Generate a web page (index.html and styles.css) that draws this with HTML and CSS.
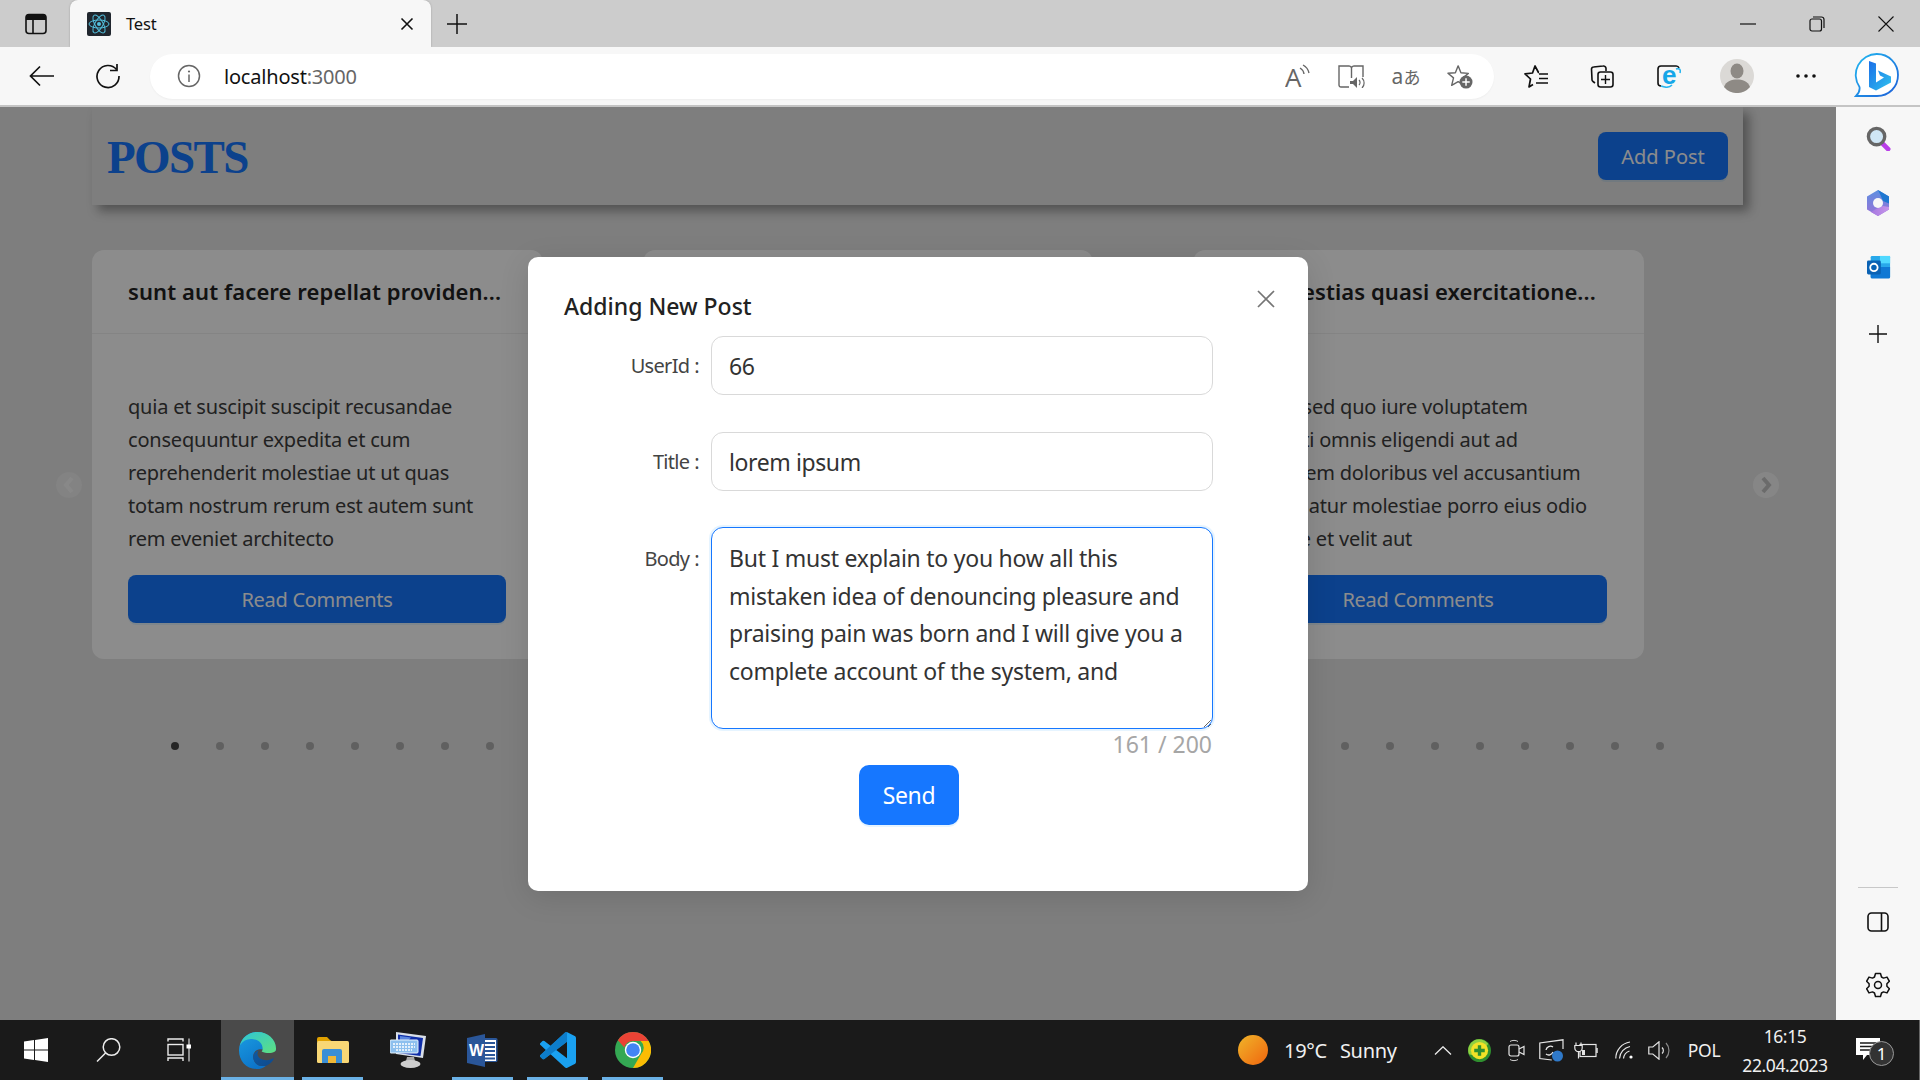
FILE: index.html
```html
<!DOCTYPE html>
<html lang="en">
<head>
<meta charset="utf-8">
<title>Test</title>
<link rel="stylesheet" href="styles.css">
</head>
<body>
<div class="tabstrip">
  <div class="tab-side">
    <svg width="24" height="24" viewBox="0 0 24 24"><rect x="2" y="2.500" width="20" height="19" rx="3" fill="none" stroke="#111" stroke-width="1.600"/><path d="M2 6a3.500 3.500 0 0 1 3.500-3.500h13A3.500 3.500 0 0 1 22 6v2H2z" fill="#111"/><path d="M9 8v13" stroke="#111" stroke-width="1.600"/></svg>
  </div>
  <div class="tab">
    <svg class="favicon" width="24" height="24" viewBox="0 0 24 24"><rect width="24" height="24" rx="2" fill="#20262e"/><g fill="none" stroke="#53c1de" stroke-width="1"><ellipse cx="12" cy="12" rx="10" ry="4"/><ellipse cx="12" cy="12" rx="10" ry="4" transform="rotate(60 12 12)"/><ellipse cx="12" cy="12" rx="10" ry="4" transform="rotate(120 12 12)"/></g><circle cx="12" cy="12" r="2" fill="#53c1de"/></svg>
    <span class="tab-title">Test</span>
    <svg class="tab-close" width="14" height="14" viewBox="0 0 14 14"><path d="M1.500 1.500l11 11M12.500 1.500l-11 11" stroke="#111" stroke-width="1.600"/></svg>
  </div>
  <div class="tab-new">
    <svg width="22" height="22" viewBox="0 0 22 22"><path d="M11 1v20M1 11h20" stroke="#111" stroke-width="1.500"/></svg>
  </div>
  <div class="win-controls">
    <div class="win-btn"><svg width="16" height="16" viewBox="0 0 16 16"><path d="M0 8h16" stroke="#111" stroke-width="1.200"/></svg></div>
    <div class="win-btn"><svg width="16" height="16" viewBox="0 0 16 16"><rect x="1" y="3" width="11.500" height="12" rx="2" fill="none" stroke="#111" stroke-width="1.200"/><path d="M4 1h8.500a2.500 2.500 0 0 1 2.500 2.500V12" fill="none" stroke="#111" stroke-width="1.200"/></svg></div>
    <div class="win-btn"><svg width="16" height="16" viewBox="0 0 16 16"><path d="M.5.500l15 15M15.500.500l-15 15" stroke="#111" stroke-width="1.100"/></svg></div>
  </div>
</div>

<div class="toolbar">
  <div class="tool"><svg width="26" height="22" viewBox="0 0 26 22"><path d="M25 11H2M11 1.500L1.500 11l9.500 9.500" fill="none" stroke="#111" stroke-width="1.700"/></svg></div>
  <div class="tool"><svg width="26" height="26" viewBox="0 0 26 26"><path d="M21.500 6.500A11 11 0 1 0 24 13" fill="none" stroke="#111" stroke-width="1.700"/><path d="M22 1v6.500h-7" fill="none" stroke="#111" stroke-width="1.700"/></svg></div>
  <div class="address">
    <svg class="addr-info" width="24" height="24" viewBox="0 0 24 24"><circle cx="12" cy="12" r="10.500" fill="none" stroke="#666" stroke-width="1.500"/><path d="M12 10.500V18" stroke="#666" stroke-width="1.500"/><circle cx="12" cy="7.500" r="1.100" fill="#666"/></svg>
    <div class="addr-text">localhost<span class="addr-port">:3000</span></div>
    <div class="addr-icon w50"><svg width="26" height="24" viewBox="0 0 26 24"><text x="0" y="23" class="svg-a">A</text><path d="M15 4a8 8 0 0 1 4 6M18 1a12 12 0 0 1 6 8" fill="none" stroke="#666" stroke-width="1.400"/></svg></div>
    <div class="addr-icon w56"><svg width="27" height="23" viewBox="0 0 27 23"><path d="M11 22H3a2 2 0 0 1-2-2V1h10a2.500 2.500 0 0 1 2.500 2A2.500 2.500 0 0 1 16 1h9v11M13.500 3v10" fill="none" stroke="#666" stroke-width="1.400"/><path d="M12 16h3l4-4v11l-4-4h-3z" fill="#666"/><path d="M21 15a3.500 3.500 0 0 1 0 5M24 13a7 7 0 0 1 0 10" fill="none" stroke="#666" stroke-width="1.200"/></svg></div>
    <div class="addr-icon w54"><span class="translate">a<span class="translate-ja">あ</span></span></div>
    <div class="addr-icon w54"><svg width="26" height="25" viewBox="0 0 28 27"><path d="M12 2l3 7.500 8 .6-6 5 1.800 8L12 19l-7 4 2-8-6-5 8-.5z" fill="none" stroke="#666" stroke-width="1.500" stroke-linejoin="round"/><circle cx="20.500" cy="19.500" r="7" fill="#666"/><path d="M20.500 15.500v8M16.500 19.500h8" stroke="#fff" stroke-width="1.600"/></svg></div>
  </div>
  <div class="tool t1"><svg width="25" height="23" viewBox="0 0 25 23"><path d="M15 7.500h-.5L11 1 8.500 8 1 8.800 6.500 14 5 22l4-2.500" fill="none" stroke="#111" stroke-width="1.700" stroke-linejoin="round"/><path d="M15 9h9M15 13.500h9M12 18h12" stroke="#111" stroke-width="1.700"/></svg></div>
  <div class="tool"><svg width="24" height="23" viewBox="0 0 24 23"><path d="M5 18l-2-1.500a2 2 0 0 1-1-2L1.500 4a2 2 0 0 1 2-2L13 1a2.500 2.500 0 0 1 3 2.500V6" fill="none" stroke="#111" stroke-width="1.600"/><rect x="8" y="7" width="15" height="15" rx="2.500" fill="#f7f7f7" stroke="#111" stroke-width="1.600"/><path d="M15.500 10v9M11 14.500h9" stroke="#111" stroke-width="1.400"/></svg></div>
  <div class="tool"><svg width="24" height="23" viewBox="0 0 24 23"><path d="M4 21a3 3 0 0 1-3-3V4a3 3 0 0 1 3-3h15a3 3 0 0 1 3 2" fill="none" stroke="#111" stroke-width="1.600"/><text x="5" y="19" class="svg-e">e</text><path d="M4 21c5 2 9 1 11-1M19 4c3-1 5 0 4 4" fill="none" stroke="#2bb6ee" stroke-width="1.600"/></svg></div>
  <div class="tool"><svg width="34" height="34" viewBox="0 0 34 34"><circle cx="17" cy="17" r="17" fill="#dbd9d6"/><ellipse cx="17" cy="12" rx="6.500" ry="7.500" fill="#8e8a85"/><path d="M4 28c2-6 8-7.500 13-7.500S28 22 30 28a17 17 0 0 1-26 0z" fill="#8e8a85"/></svg></div>
  <div class="tool"><svg width="22" height="6" viewBox="0 0 22 6"><circle cx="3" cy="3" r="1.800" fill="#111"/><circle cx="11" cy="3" r="1.800" fill="#111"/><circle cx="19" cy="3" r="1.800" fill="#111"/></svg></div>
  <div class="tool"><svg width="46" height="46" viewBox="0 0 46 46"><defs><linearGradient id="bingb" x1="0" y1="0" x2="1" y2="1"><stop offset="0" stop-color="#1b6fe8"/><stop offset="1" stop-color="#2fc2ee"/></linearGradient><linearGradient id="bingo" x1="0" y1="0" x2="1" y2="1"><stop offset="0" stop-color="#22b8f0"/><stop offset="1" stop-color="#1d5fd8"/></linearGradient></defs><path d="M23 1a21 21 0 0 1 21 21c0 12-9 21-21 21H2c3-3 4-6 3.500-9A21 21 0 0 1 23 1z" fill="#fff" stroke="url(#bingo)" stroke-width="1.800"/><path d="M15 8l7 2.500v19l8-5-4-2-2-5 13 6v6l-15 8-7-3.500z" fill="url(#bingb)"/></svg></div>
</div>

<div class="main">
  <div class="viewport">
    <header class="page-header">
      <h1 class="page-title">POSTS</h1>
      <button class="primary add-post">Add Post</button>
    </header>
    <div class="carousel">
      <div class="cards">
        <article class="card">
          <div class="card-head">sunt aut facere repellat providen...</div>
          <div class="card-body">
            <p class="card-text">quia et suscipit suscipit recusandae consequuntur expedita et cum reprehenderit molestiae ut ut quas totam nostrum rerum est autem sunt rem eveniet architecto</p>
            <button class="primary read">Read Comments</button>
          </div>
        </article>
        <article class="card">
          <div class="card-head">qui est esse</div>
          <div class="card-body">
            <p class="card-text">est rerum tempore vitae sequi sint nihil reprehenderit dolor beatae ea dolores neque fugiat blanditiis voluptate porro vel nihil molestiae ut reiciendis qui aperiam non</p>
            <button class="primary read">Read Comments</button>
          </div>
        </article>
        <article class="card">
          <div class="card-head">ea molestias quasi exercitatione...</div>
          <div class="card-body">
            <p class="card-text">et iusto sed quo iure voluptatem occaecati omnis eligendi aut ad voluptatem doloribus vel accusantium quis pariatur molestiae porro eius odio et labore et velit aut</p>
            <button class="primary read">Read Comments</button>
          </div>
        </article>
        <article class="card">
          <div class="card-head">eum et est occaecati</div>
          <div class="card-body">
            <p class="card-text">ullam et saepe reiciendis voluptatem adipisci sit amet autem assumenda</p>
            <button class="primary read">Read Comments</button>
          </div>
        </article>
      </div>
      <span class="arrow arrow-left"><svg width="14" height="18" viewBox="0 0 14 18"><path d="M10 2L4 9l6 7" fill="none" stroke="#f8f8f8" stroke-width="4"/></svg></span>
      <span class="arrow arrow-right"><svg width="14" height="18" viewBox="0 0 14 18"><path d="M4 2l6 7-6 7" fill="none" stroke="#c4c4c4" stroke-width="4"/></svg></span>
    </div>
    <div class="dots">
      <i class="dot active"></i><i class="dot"></i><i class="dot"></i><i class="dot"></i><i class="dot"></i><i class="dot"></i><i class="dot"></i><i class="dot"></i><i class="dot"></i><i class="dot"></i><i class="dot"></i><i class="dot"></i><i class="dot"></i><i class="dot"></i><i class="dot"></i><i class="dot"></i><i class="dot"></i><i class="dot"></i><i class="dot"></i><i class="dot"></i><i class="dot"></i><i class="dot"></i><i class="dot"></i><i class="dot"></i><i class="dot"></i><i class="dot"></i><i class="dot"></i><i class="dot"></i><i class="dot"></i><i class="dot"></i><i class="dot"></i><i class="dot"></i><i class="dot"></i><i class="dot"></i>
    </div>

    <div class="backdrop">
      <div class="modal">
        <svg class="modal-close" width="18" height="18" viewBox="0 0 18 18"><path d="M1 1l16 16M17 1L1 17" stroke="#757575" stroke-width="1.700"/></svg>
        <div class="modal-title">Adding New Post</div>
        <form class="form">
          <label class="label">UserId<span class="colon">:</span></label>
          <input class="field" type="text" value="66">
          <label class="label">Title<span class="colon">:</span></label>
          <input class="field field-last" type="text" value="lorem ipsum">
          <label class="label label-body">Body<span class="colon">:</span></label>
          <textarea class="field area">But I must explain to you how all this mistaken idea of denouncing pleasure and praising pain was born and I will give you a complete account of the system, and</textarea>
          <div class="count">161 / 200</div>
          <button type="button" class="send">Send</button>
        </form>
      </div>
    </div>
  </div>

  <aside class="sidebar">
    <div class="side-top">
      <div class="side-item"><svg width="25" height="25" viewBox="0 0 26 26"><path d="M16 17l7 7" stroke="#b93fe8" stroke-width="5" stroke-linecap="round"/><circle cx="11" cy="11" r="8.500" fill="#cfe6f5" stroke="#666" stroke-width="3.500"/></svg></div>
      <div class="side-item"><svg width="24" height="26" viewBox="0 0 24 26"><defs><linearGradient id="cop1" x1="0" y1="0" x2="0" y2="1"><stop offset="0" stop-color="#5d8fe0"/><stop offset="1" stop-color="#9a72d8"/></linearGradient><linearGradient id="cop2" x1="0" y1="0" x2="1" y2="0"><stop offset="0" stop-color="#a678e0"/><stop offset="1" stop-color="#c796ea"/></linearGradient></defs><path d="M12 0l11 6.500v13L12 26 1 19.500v-13z" fill="url(#cop1)"/><path d="M12 0l11 6.500v7l-6-2.500-3-7z" fill="#1f78d1"/><path d="M23 19.500L12 26 5 22l5-3 7-3 6 1z" fill="url(#cop2)"/><circle cx="12" cy="13" r="5" fill="#f7f7f7"/></svg></div>
      <div class="side-item"><svg class="outlook" width="24" height="24" viewBox="0 0 26 26"><rect x="4" y="1" width="21" height="24" rx="1.500" fill="#28a8ea"/><path d="M4 13h21v11a1.500 1.500 0 0 1-1.500 1.500h-18A1.500 1.500 0 0 1 4 24z" fill="#0f78d4"/><rect x="14" y="1" width="11" height="8" fill="#50d9ff"/><rect x="0" y="6" width="15" height="15" rx="1.500" fill="#0a62b4"/><circle cx="7.500" cy="13.500" r="4" fill="none" stroke="#fff" stroke-width="2"/></svg></div>
      <div class="side-item"><svg width="18" height="18" viewBox="0 0 18 18"><path d="M9 0v18M0 9h18" stroke="#111" stroke-width="1.400"/></svg></div>
    </div>
    <div class="side-bottom">
      <div class="side-sep"></div>
      <div class="side-panel"><svg width="22" height="20" viewBox="0 0 22 20"><rect x="1" y="1" width="20" height="18" rx="3.500" fill="none" stroke="#111" stroke-width="1.600"/><path d="M14.500 1v18" stroke="#111" stroke-width="1.600"/></svg></div>
      <div class="side-gear"><svg width="24" height="26" viewBox="0 0 24 26"><circle cx="12" cy="13" r="3.500" fill="none" stroke="#111" stroke-width="1.500"/><path d="M9.500 1.500h5l1 3.500 2 1.100 3.500-1 2.400 4.200-2.500 2.500v2.400l2.500 2.500-2.400 4.200-3.500-1-2 1.100-1 3.500h-5l-1-3.500-2-1.100-3.500 1L.6 16.700l2.500-2.500v-2.400L.6 9.300 3 5.100l3.500 1 2-1.100z" fill="none" stroke="#111" stroke-width="1.500" stroke-linejoin="round"/></svg></div>
    </div>
  </aside>
</div>

<footer class="taskbar">
  <div class="task-left">
    <div class="task-slot w72"><svg width="24" height="24" viewBox="0 0 24 24"><path d="M0 3.500l10-1.400v9.400H0zM11 2l13-2v11.500H11zM0 12.500h10v9.400l-10-1.400zM11 12.500h13V24l-13-2z" fill="#fff"/></svg></div>
    <div class="task-slot w72"><svg width="25" height="24" viewBox="0 0 25 24"><circle cx="15.500" cy="9" r="8.300" fill="none" stroke="#ececec" stroke-width="1.500"/><path d="M9.500 15L1 23.500" stroke="#ececec" stroke-width="1.500"/></svg></div>
    <div class="task-slot w70"><svg width="24" height="24" viewBox="0 0 24 24"><path d="M1 3.500V1h15v2.500M1 23v-3h15v3" fill="none" stroke="#ececec" stroke-width="1.400"/><rect x="1" y="6.500" width="15" height="10.500" fill="none" stroke="#ececec" stroke-width="1.400"/><path d="M22 .5v23" stroke="#ececec" stroke-width="1.100"/><rect x="19.500" y="6.500" width="4.500" height="4" fill="#fff"/></svg></div>
    <div class="task-slot edge-tile app-line">
      <svg width="37" height="37" viewBox="0 0 36 36"><defs><linearGradient id="edge1" x1="0" y1="0" x2="1" y2="1"><stop offset="0" stop-color="#0c59a4"/><stop offset="1" stop-color="#114a8b"/></linearGradient><linearGradient id="edge2" x1="0" y1="0" x2=".6" y2="1"><stop offset="0" stop-color="#1b9de2"/><stop offset="1" stop-color="#0b70c7"/></linearGradient><linearGradient id="edge3" x1="0" y1="0" x2="1" y2="1"><stop offset="0" stop-color="#2ec5d8"/><stop offset="1" stop-color="#5fe07f"/></linearGradient></defs><path d="M18 0C8 0 0 8 0 18c0 10 7 18 17 18 4 0 7-1 9-3-6 1-11-2-12-7-1-4 1-8 5-9 5-1 9 2 17 1C36 8 28 0 18 0z" fill="url(#edge2)"/><path d="M18 0C10 0 3 5 1 13c3-5 8-7 13-6 6 1 9 5 9 9 0 1 0 2-1 3 5 2 9 2 13 0 1-1 1-2 1-3C36 7 28 0 18 0z" fill="url(#edge3)"/><path d="M14 26c1 5 6 8 12 7 3-1 7-4 8-8-4 3-9 3-13 1-3-2-4-5-2-8-3 1-6 4-5 8z" fill="url(#edge1)"/></svg>
    </div>
    <div class="task-slot app first app-line"><svg width="32" height="26" viewBox="0 0 32 26"><path d="M0 2a2 2 0 0 1 2-2h8l3 3 3 2H0z" fill="#e0a100"/><rect x="0" y="4" width="32" height="22" rx="1.500" fill="#f8d775"/><path d="M5 26V14a2 2 0 0 1 2-2h16a2 2 0 0 1 2 2v12h-6v-7h-8v7z" fill="#3a8fd6"/><rect x="11" y="19" width="8" height="7" fill="#f0b838"/></svg></div>
    <div class="task-slot app"><svg width="36" height="36" viewBox="0 0 36 36"><path d="M6 0l30 4-3 22-27-4z" fill="#d9dfe8"/><path d="M8 2.500l25 3.500-2.500 18L8 21z" fill="#0e2da8"/><path d="M10 4l11 1.500L14 14l-4-.5z" fill="#5a86e0"/><rect x="0" y="8" width="28" height="13" rx="1" fill="#8dc0ee" stroke="#e6f2fb"/><path d="M3 12h22M3 15h22M6 18h16" stroke="#fff" stroke-width="1.500" stroke-dasharray="2 1"/><path d="M17 25h7l1 4H16z" fill="#a8a8a8"/><ellipse cx="20.500" cy="32" rx="10" ry="4" fill="#cfcfcf"/></svg></div>
    <div class="task-slot app app-line"><svg width="31" height="33" viewBox="0 0 31 33"><path d="M10 4h19a1.500 1.500 0 0 1 1.500 1.500v21a1.500 1.500 0 0 1-1.500 1.500H10z" fill="#2a5699"/><rect x="17" y="6" width="12" height="21" fill="#fff"/><path d="M18 9h10M18 13h10M18 17h10M18 21h10M18 24.500h10" stroke="#2a5699" stroke-width="1.800"/><path d="M0 4l18-4v33L0 29z" fill="#2a5699"/><text x="2" y="22" class="svg-w">W</text></svg></div>
    <div class="task-slot app app-line"><svg width="36" height="36" viewBox="0 0 24 24"><path fill="#1aa1f1" d="M23.150 2.587L18.210.21a1.494 1.494 0 0 0-1.705.29l-9.460 8.630-4.120-3.128a.999.999 0 0 0-1.276.057L.327 7.261A1 1 0 0 0 .326 8.740L3.899 12 .326 15.260a1 1 0 0 0 .001 1.479L1.650 17.940a.999.999 0 0 0 1.276.057l4.120-3.128 9.460 8.630a1.492 1.492 0 0 0 1.704.29l4.942-2.377A1.500 1.500 0 0 0 24 20.060V3.939a1.500 1.500 0 0 0-.85-1.352zm-5.146 14.861L10.826 12l7.178-5.448v10.896z"/><path fill="#0a72bd" opacity=".75" d="M18.004 0v6.552L2.926 17.997a1 1 0 0 1-1.276-.057L.327 16.739a1 1 0 0 1 0-1.479L16.505.5A1.494 1.494 0 0 1 18.004 0z"/></svg></div>
    <div class="task-slot app app-line"><svg width="36" height="36" viewBox="0 0 36 36"><circle cx="18" cy="18" r="18" fill="#34a853"/><path d="M18 0a18 18 0 0 1 15.600 9H18a9 9 0 0 0-8.700 6.600L2.900 8.300A18 18 0 0 1 18 0z" fill="#ea4335"/><path d="M33.600 9A18 18 0 0 1 18 36l7.800-13.500a9 9 0 0 0-.2-13.500z" fill="#fbbc04"/><circle cx="18" cy="18" r="8.200" fill="#fff"/><circle cx="18" cy="18" r="6.800" fill="#4285f4"/></svg></div>
  </div>
  <div class="tray">
    <div class="tray-sun"></div>
    <div class="tray-weather"><span>19°C</span><span>Sunny</span></div>
    <div class="tray-item"><svg width="18" height="9" viewBox="0 0 18 9"><path d="M1 8.500L9 .8l8 7.700" fill="none" stroke="#ececec" stroke-width="1.300"/></svg></div>
    <div class="tray-item"><svg width="23" height="23" viewBox="0 0 24 24"><circle cx="12" cy="12" r="12" fill="#2f8f2f"/><path d="M1 16A11.500 11.500 0 0 1 21 5l-2 3a8 8 0 0 0-14 9z" fill="#8fcf40"/><circle cx="12" cy="12" r="9" fill="#f2e227"/><path d="M12 6.500v11M6.500 12h11" stroke="#2f8f2f" stroke-width="3.500"/></svg></div>
    <div class="tray-item"><svg width="17" height="23" viewBox="0 0 17 23"><rect x="1" y="6" width="10" height="11" rx="2" fill="none" stroke="#e6e6e6" stroke-width="1.200"/><path d="M11 10l5-2.500v8L11 13" fill="none" stroke="#e6e6e6" stroke-width="1.200"/><path d="M2 2.500c2-1.500 6-1.500 8 0M2 20.500c2 1.500 6 1.500 8 0" fill="none" stroke="#d0d0d0" stroke-width="1"/></svg></div>
    <div class="tray-item"><svg width="25" height="23" viewBox="0 0 25 23"><path d="M24 10V.8L.8 4v15.500l12 1.500" fill="none" stroke="#e6e6e6" stroke-width="1.200"/><path d="M7 11a4.500 4.500 0 0 1 7-3M14 13a4.500 4.500 0 0 1-7 2" fill="none" stroke="#e6e6e6" stroke-width="1.300"/><circle cx="18.500" cy="17" r="5.500" fill="#2f79c9"/></svg></div>
    <div class="tray-item"><svg width="24" height="17" viewBox="0 0 24 17"><rect x="6" y="2.500" width="16" height="12" fill="none" stroke="#e6e6e6" stroke-width="1.200"/><path d="M23 6v5" stroke="#e6e6e6" stroke-width="1.500"/><path d="M2 .5v3M7 .5v3M.8 3.500h7.400v2.500a3.700 3.700 0 0 1-7.400 0zM4.500 9.700v6.800" fill="#1a1a1a" stroke="#e6e6e6" stroke-width="1.200"/><rect x="8" y="8" width="3" height="5" fill="#e6e6e6"/></svg></div>
    <div class="tray-item"><svg width="19" height="18" viewBox="0 0 19 18"><path d="M.8 17.500A16.500 16.500 0 0 1 15 1M4.500 17.500A13 13 0 0 1 15 5.500M8.500 17.500a9 9 0 0 1 6-7.500" fill="none" stroke="#e6e6e6" stroke-width="1.200"/><circle cx="16" cy="16" r="1.600" fill="#fff"/></svg></div>
    <div class="tray-item"><svg width="22" height="19" viewBox="0 0 22 19"><path d="M.8 6h4L11 .8v17.400L4.800 13h-4z" fill="none" stroke="#e6e6e6" stroke-width="1.200"/><path d="M14 6.500a4 4 0 0 1 0 6" fill="none" stroke="#e6e6e6" stroke-width="1.200"/><path d="M18 2a11 11 0 0 1 0 15" fill="none" stroke="#8a8a8a" stroke-width="1.200"/></svg></div>
    <div class="tray-lang">POL</div>
    <div class="tray-clock"><span>16:15</span><span>22.04.2023</span></div>
    <div class="tray-notify">
      <svg class="notify-glyph" width="24" height="26" viewBox="0 0 24 26"><path d="M0 0h24v17H11l-4 5v-5H0z" fill="#fff"/><path d="M4 5h16M4 8.500h16M4 12h11" stroke="#1a1a1a" stroke-width="1.400"/></svg>
      <span class="badge">1</span>
    </div>
  </div>
</footer>
</body>
</html>
```

FILE: styles.css
```css
* { box-sizing: border-box; }
html, body { margin: 0; height: 100%; }
body {
  width: 1920px;
  height: 1080px;
  overflow: hidden;
  display: flex;
  flex-direction: column;
  font-family: "Noto Sans", "Open Sans", sans-serif;
  color: #222;
}
svg { display: block; flex: none; }

/* tab strip */
.tabstrip { height: 47px; background: #cccccc; display: flex; align-items: stretch; }
.tab-side { width: 70px; padding-left: 2px; display: flex; align-items: center; justify-content: center; }
.tab {
  width: 361px;
  background: #f7f7f7;
  border-radius: 8px 8px 0 0;
  display: flex;
  align-items: center;
  padding: 0 17px;
  box-shadow: 0 0 2px rgba(0,0,0,.25);
}
.tab-title { margin-left: 15px; font-size: 16.500px; letter-spacing: -.2px; flex: 1; color: #111; }
.tab-new { width: 52px; display: flex; align-items: center; justify-content: center; }
.win-controls { margin-left: auto; display: flex; }
.win-btn { width: 69px; display: flex; align-items: center; justify-content: center; }

/* toolbar */
.toolbar {
  height: 60px;
  background: #f7f7f7;
  border-bottom: 2px solid #c4c4c4;
  display: grid;
  grid-template-columns: 84px 48px 1362px 75px 66px 68px 68px 70px 72px;
  align-items: center;
}
.tool { display: flex; align-items: center; justify-content: center; height: 58px; }
.t1 { padding-left: 9px; }
.address {
  margin-left: 18px;
  height: 45px;
  background: #fff;
  border-radius: 23px;
  display: flex;
  align-items: center;
  padding: 0 7px 0 27px;
  box-shadow: 0 1px 2px rgba(0,0,0,.04);
}
.addr-text { margin-left: 23px; flex: 1; font-size: 20px; letter-spacing: -.2px; color: #111; }
.addr-port { color: #666; }
.addr-icon { display: flex; align-items: center; justify-content: center; height: 45px; }
.w50 { width: 50px; }
.w56 { width: 56px; }
.w54 { width: 54px; }
.svg-a { font: 26px "Open Sans", sans-serif; fill: #666; }
.svg-e { font: 700 26px "Liberation Sans", sans-serif; fill: #16a6e8; }
.svg-w { font: 700 16px "Liberation Sans", sans-serif; fill: #fff; }
.translate { font-size: 21px; color: #666; display: flex; align-items: baseline; }
.translate-ja { font-family: "Noto Sans CJK JP", sans-serif; font-size: 17px; }

/* main */
.main { flex: 1; display: flex; min-height: 0; }
.viewport {
  position: relative;
  width: 1836px;
  background: #e5e5e5;
  padding: 0 93px 0 92px;
  overflow: hidden;
}
.page-header {
  height: 98px;
  background: #e5e5e5;
  display: flex;
  align-items: center;
  justify-content: space-between;
  padding: 0 15px;
  box-shadow: 6px 6px 10px rgba(0,0,0,.35);
}
.page-title {
  margin: 2px 0 0;
  font: 700 47px "Liberation Serif", serif;
  letter-spacing: -1.600px;
  color: #1677ff;
}
.primary {
  font-family: inherit;
  background: #1677ff;
  color: #fff;
  border: 0;
  border-radius: 8px;
  height: 48px;
  font-size: 20px;
  box-shadow: 0 2px 0 rgba(5,145,255,.1);
  padding: 1px 0 0;
}
.add-post { width: 130px; letter-spacing: 0; }

.carousel { position: relative; margin: 45px -93px 0 -92px; padding: 0 93px 0 92px; }
.cards { display: flex; gap: 100px; overflow: hidden; }
.card {
  flex: 0 0 450.500px;
  height: 409px;
  background: #fff;
  border-radius: 12px;
}
.card-head {
  height: 84px;
  border-bottom: 1px solid #f0f0f0;
  padding: 0 36px 2px;
  display: flex;
  align-items: center;
  font-size: 22px;
  font-weight: 600;
  letter-spacing: .1px;
  color: #222;
  white-space: nowrap;
}
.card-body { padding: 56px 36px 36px; }
.card-text { margin: 0 0 20px; height: 165px; font-size: 20px; line-height: 33px; letter-spacing: -.2px; color: #3c3c3c; overflow: hidden; }
.read { width: 378px; display: block; letter-spacing: -.3px; }
.arrow {
  position: absolute;
  top: 222px;
  width: 26px;
  height: 26px;
  border-radius: 50%;
  display: flex;
  align-items: center;
  justify-content: center;
}
.arrow-left { left: 56px; background: #eeeeee; }
.arrow-right { left: 1753px; background: #f5f5f5; }

.dots { display: flex; gap: 37px; margin: 83px 0 0 79px; }
.dot { width: 8px; height: 8px; border-radius: 50%; background: #afafaf; flex: none; }
.dot.active { background: #464646; }

/* modal */
.backdrop {
  position: absolute;
  inset: 0;
  background: rgba(0,0,0,.45);
  display: flex;
  justify-content: center;
  align-items: flex-start;
  padding-top: 150px;
}
.modal {
  position: relative;
  width: 780px;
  height: 634px;
  background: #fff;
  border-radius: 10px;
  padding: 35px 0 0 36px;
  box-shadow: 0 6px 30px rgba(0,0,0,.12);
}
.modal-close { position: absolute; top: 33px; right: 33px; }
.modal-title { height: 29px; line-height: 29px; font-size: 23px; font-weight: 500; color: #222; margin-bottom: 15px; }
.form { display: grid; grid-template-columns: 135px 502px; column-gap: 12px; align-items: start; justify-content: start; }
.label { height: 59px; line-height: 60px; font-size: 20px; letter-spacing: -.7px; color: #444; text-align: right; white-space: nowrap; }
.colon { margin-left: 5px; }
.label-body { height: 64px; line-height: 64px; }
.field {
  width: 502px;
  height: 59px;
  border: 1px solid #d9d9d9;
  border-radius: 12px;
  padding: 0 17px;
  font-family: inherit;
  font-size: 23px;
  letter-spacing: -.4px;
  color: #333;
  background: #fff;
  outline: 0;
  margin-bottom: 37px;
}
.field-last { margin-bottom: 36px; }
.area {
  height: 202px;
  margin-bottom: 0;
  padding: 12px 17px 0;
  line-height: 37.500px;
  letter-spacing: -.25px;
  border-color: #1677ff;
  box-shadow: 0 0 0 2px rgba(5,145,255,.1);
  resize: vertical;
  display: block;
}
.count { grid-column: 2; text-align: right; height: 36px; line-height: 31px; padding-right: 1px; font-size: 23px; color: #a6a6a6; }
.send {
  grid-column: 1 / 3;
  justify-self: start;
  margin-left: 295px;
  width: 100px;
  height: 60px;
  border: 0;
  border-radius: 10px;
  background: #1677ff;
  color: #fff;
  font-family: inherit;
  font-size: 23px;
  letter-spacing: -.4px;
  padding: 0;
  box-shadow: 0 2px 0 rgba(5,145,255,.1);
}

/* edge sidebar */
.sidebar { width: 84px; background: #f7f7f7; display: flex; flex-direction: column; justify-content: space-between; }
.side-top { display: grid; grid-template-rows: 62px 68px 60px 74px; }
.side-item { display: flex; align-items: center; justify-content: center; }
.outlook { margin-left: 2px; }
.side-bottom { display: flex; flex-direction: column; align-items: center; }
.side-sep { width: 40px; height: 1px; background: #c8c8c8; margin-bottom: 6px; }
.side-panel { height: 56px; display: flex; align-items: center; justify-content: center; }
.side-gear { height: 70px; display: flex; align-items: center; justify-content: center; }

/* taskbar */
.taskbar { height: 60px; background: #1a1a1a; display: flex; justify-content: space-between; color: #f0f0f0; }
.task-left { display: flex; }
.task-slot { display: flex; align-items: center; justify-content: center; position: relative; }
.w72 { width: 72px; }
.w70 { width: 70px; }
.edge-tile { background: #4a4a4a; margin-left: 7px; width: 73px; }
.app { width: 61px; margin-left: 14px; }
.app.first { margin-left: 8px; }
.app-line::after { content: ""; position: absolute; left: 0; right: 0; bottom: 0; height: 3px; background: #6ab1e6; }
.tray { display: grid; grid-template-columns: 36px 155px 34px 38px 36px 34px 36px 40px 30px 60px 102px 66px 17px; align-items: center; border-right: 1px solid #666; }
.tray-sun { width: 30px; height: 30px; border-radius: 50%; justify-self: center; background: linear-gradient(135deg, #f0b52a, #f0650e); }
.tray-weather { padding-left: 13px; display: flex; gap: 13px; font-size: 20px; letter-spacing: -.3px; white-space: nowrap; }
.tray-item { display: flex; align-items: center; justify-content: center; }
.tray-lang { text-align: center; font-size: 17.500px; letter-spacing: -.3px; }
.tray-clock { display: flex; flex-direction: column; align-items: center; gap: 7px; font-size: 17.500px; line-height: 22px; letter-spacing: -.4px; }
.tray-notify { position: relative; display: flex; justify-content: center; }
.notify-glyph { margin-top: 2px; margin-left: -2px; }
.badge {
  position: absolute;
  left: 33px;
  top: 5px;
  width: 25px;
  height: 25px;
  border-radius: 50%;
  border: 1px solid #999;
  background: #333;
  color: #fff;
  font-size: 17px;
  line-height: 23px;
  text-align: center;
}
```
